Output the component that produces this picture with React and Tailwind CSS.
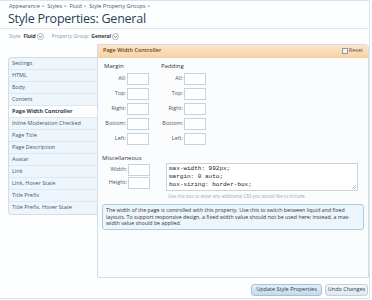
const groups = [
  'Settings',
  'HTML',
  'Body',
  'Content',
  'Page Width Controller',
  'Inline Moderation Checked',
  'Page Title',
  'Page Description',
  'Avatar',
  'Link',
  'Link, Hover State',
  'Title Prefix',
  'Title Prefix, Hover State',
]

const sides = ['All:', 'Top:', 'Right:', 'Bottom:', 'Left:']

function Chevron() {
  return (
    <svg width="7" height="7" viewBox="0 0 10 10" className="ml-[1px]">
      <circle cx="5" cy="5" r="4.3" fill="#fff" stroke="#8a9aa8" strokeWidth="1" />
      <path d="M3 4.2 L5 6.2 L7 4.2" fill="none" stroke="#4a5a68" strokeWidth="1.1" />
    </svg>
  )
}

function BoxGroup({ title }) {
  return (
    <div className="w-[57px]">
      <div className="h-[13px] pl-[1px] text-[6px] leading-[13px] text-[#333]">{title}</div>
      <div className="flex flex-col gap-[3px]">
        {sides.map(s => (
          <div key={s} className="flex items-center">
            <span className="w-[24px] pr-[1px] text-right text-[5.5px] text-[#555]">{s}</span>
            <span className="h-[12px] w-[22px] border border-[#c8d2dc] bg-white" />
          </div>
        ))}
      </div>
    </div>
  )
}

export default function App() {
  return (
    <div className="h-[300px] w-[372px] overflow-hidden bg-white font-['Open_Sans',sans-serif]">
      <div className="h-[299px] w-[370px] border-r border-b border-t border-[#dde3e8] bg-[#fdfeff]">
        <div className="pl-[9px] pt-[1px] text-[5.5px] leading-[8px] text-[#3d5a77]">
          Appearance &gt; &nbsp;Styles &gt; &nbsp;Fluid &gt; &nbsp;Style Property Groups &gt;
        </div>
        <div className="pl-[8px] text-[12.5px] leading-[17px] tracking-[-0.25px] text-[#2b3f52]">
          Style Properties: General
        </div>
        <div className="mt-[1px] border-t border-[#e3e8ec]" />
        <div className="flex items-center pl-[9px] pt-[4px] text-[5px] text-[#8a97a3]">
          <span>Style:</span>
          <span className="ml-[2px] font-bold text-[#333]">Fluid</span>
          <Chevron />
          <span className="ml-[8px]">Property Group:</span>
          <span className="ml-[2px] font-bold text-[#333]">General</span>
          <Chevron />
        </div>

        <div className="mt-[3px] flex pl-[8px]">
          <div className="mt-[13px] w-[89px]">
            <div className="overflow-hidden rounded-l-[4px] border border-r-0 border-[#cfdde9] bg-[#eef5fb]">
              {groups.map((g, i) => (
                <div
                  key={g}
                  className={
                    i === 4
                      ? 'relative z-10 -mr-[3px] h-[12px] border-b border-[#dde8f1] bg-white pl-[3px] text-[5.5px] font-bold leading-[11px] text-[#2b3f52]'
                      : 'h-[12px] border-b border-[#dde8f1] pl-[3px] text-[5.5px] leading-[11px] text-[#3d5a77] last:border-b-0'
                  }
                >
                  {g}
                </div>
              ))}
            </div>
          </div>

          <div className="flex-1">
            <div className="h-[234px] w-[272px] rounded-tr-[4px] border border-[#d3dde6] bg-[#fbfcfe]">
              <div className="flex h-[13px] items-center justify-between rounded-tr-[4px] border-b border-[#f0cfa0] bg-gradient-to-b from-[#fce6c9] to-[#f8d4a4] px-[5px]">
                <span className="text-[5.5px] font-semibold text-[#6b3f1a]">Page Width Controller</span>
                <span className="flex items-center text-[5.5px] text-[#555]">
                  <span className="mr-[1px] h-[6px] w-[6px] border border-[#999] bg-[#f4f4f4]" />
                  Reset
                </span>
              </div>

              <div className="flex pl-[5px] pt-[2px]">
                <BoxGroup title="Margin" />
                <BoxGroup title="Padding" />
              </div>

              <div className="pl-[4px] pt-[8px] text-[6px] leading-[10px] text-[#333]">Miscellaneous</div>
              <div className="flex">
                <div className="flex flex-col gap-[1px] pl-[6px] pt-[1px]">
                  <div className="flex items-center">
                    <span className="w-[24px] pr-[1px] text-right text-[5.5px] text-[#555]">Width:</span>
                    <span className="h-[12px] w-[22px] border border-[#c8d2dc] bg-white" />
                  </div>
                  <div className="flex items-center">
                    <span className="w-[24px] pr-[1px] text-right text-[5.5px] text-[#555]">Height:</span>
                    <span className="h-[12px] w-[22px] border border-[#c8d2dc] bg-white" />
                  </div>
                </div>
                <div className="ml-[16px]">
                  <div className="relative h-[28px] w-[192px] border border-[#c8d2dc] bg-white px-[2px] pt-[1px] font-['Liberation_Mono',monospace] text-[6px] leading-[8px] text-[#222]">
                    <div>max-width: 992px;</div>
                    <div>margin: 0 auto;</div>
                    <div>box-sizing: border-box;</div>
                    <svg width="5" height="5" viewBox="0 0 5 5" className="absolute right-[1px] bottom-[1px]">
                      <path d="M1 5 L5 1 M3 5 L5 3" stroke="#aaa" strokeWidth="0.7" />
                    </svg>
                  </div>
                  <div className="pl-[2px] pt-[2px] text-[4.5px] text-[#a0a8b0]">
                    Use this box to enter any additional CSS you would like to include.
                  </div>
                </div>
              </div>

              <div className="mx-[4px] mt-[5px] rounded-[3px] border border-[#abcbe0] bg-[#edf6fc] px-[3px] py-[2px] text-[5.3px] leading-[6.5px] text-[#333]">
                The width of the page is controlled with this property. Use this to switch between liquid and fixed
                layouts. To support responsive design, a fixed width value should not be used here; instead, a max-width
                value should be applied.
              </div>
            </div>

            <div className="mt-[6px] flex justify-end gap-[3px] pr-[1px]">
              <span className="flex h-[12px] w-[71px] items-center justify-center rounded-[3px] border border-[#a9c1d6] bg-gradient-to-b from-[#e4eef7] to-[#c6d9ea] text-[5.5px] text-[#2b3f52]">
                Update Style Properties
              </span>
              <span className="flex h-[12px] w-[43px] items-center justify-center rounded-[3px] border border-[#c3d1dd] bg-gradient-to-b from-[#f3f7fb] to-[#dfe8f1] text-[5.5px] text-[#2b3f52]">
                Undo Changes
              </span>
            </div>
          </div>
        </div>
      </div>
    </div>
  )
}
